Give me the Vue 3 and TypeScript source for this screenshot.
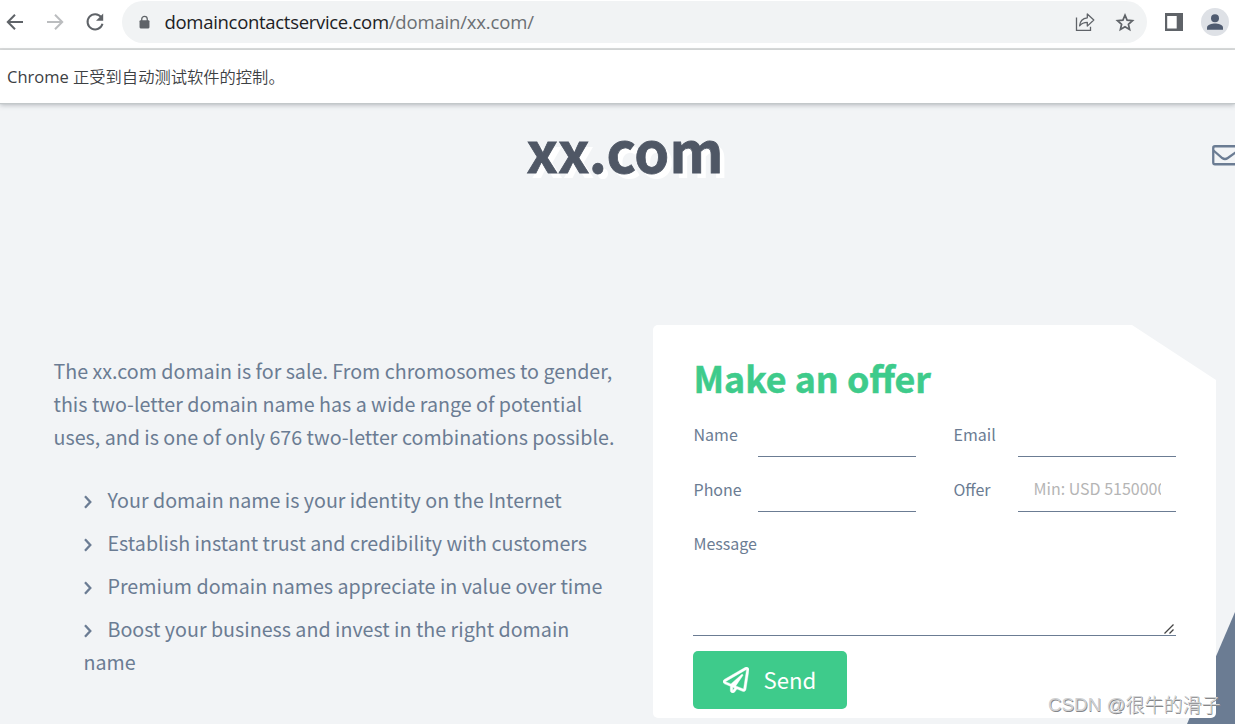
<script setup lang="ts">
import { ref } from 'vue'

interface Field {
  label: string
  name: string
  placeholder: string
}

const fields: Field[] = [
  { label: 'Name', name: 'name', placeholder: '' },
  { label: 'Email', name: 'email', placeholder: '' },
  { label: 'Phone', name: 'phone', placeholder: '' },
  { label: 'Offer', name: 'offer', placeholder: 'Min: USD 5150000' },
]

const benefits: string[][] = [
  ['Your domain name is your identity on the Internet'],
  ['Establish instant trust and credibility with customers'],
  ['Premium domain names appreciate in value over time'],
  ['Boost your business and invest in the right domain', 'name'],
]

const intro: string[] = [
  'The xx.com domain is for sale. From chromosomes to gender,',
  'this two-letter domain name has a wide range of potential',
  'uses, and is one of only 676 two-letter combinations possible.',
]

const values = ref<Record<string, string>>({ name: '', email: '', phone: '', offer: '' })
const message = ref('')
</script>

<template>
  <div class="window">
    <header class="toolbar">
      <svg class="nav" viewBox="0 0 20 20"><path d="M18 10H3M10 2.8L2.8 10l7.2 7.2" fill="none" stroke="#5f6368" stroke-width="2" /></svg>
      <svg class="nav" viewBox="0 0 20 20"><path d="M2 10h15M10 2.8l7.2 7.2-7.2 7.2" fill="none" stroke="#bbbdbf" stroke-width="2" /></svg>
      <svg class="nav" viewBox="0 0 20 20"><path d="M16.2 5.2A7.6 7.6 0 1 0 17.5 11.8" fill="none" stroke="#5f6368" stroke-width="2" /><path d="M18.2 1.6v7.2H11z" fill="#5f6368" /></svg>
      <div class="omnibox">
        <svg class="lock" viewBox="0 0 12 14"><path d="M3 6V3.8a3 3 0 0 1 6 0V6" fill="none" stroke="#5f6368" stroke-width="1.4" /><rect x=".6" y="5" width="10.8" height="9" rx="1.2" fill="#5f6368" /></svg>
        <span class="url"><span class="host">domaincontactservice.com</span><span class="path">/domain/xx.com/</span></span>
        <svg class="share" viewBox="0 0 20 20"><path d="M1.5 5.500v12.800h14v-3.500" fill="none" stroke="#5f6368" stroke-width="1.3" /><path d="M12.3 2v3.800C7.500 6.200 5 9 4.600 13.800c2-2.500 4.400-3.500 7.700-3.500v3.800L18.800 8z" fill="none" stroke="#5f6368" stroke-width="1.3" stroke-linejoin="round" /></svg>
        <svg class="star" viewBox="0 0 20 20"><path d="M10 3.200l2.100 5 5.400.5-4.100 3.600 1.200 5.300-4.600-2.800-4.600 2.800 1.200-5.300L2.500 8.700l5.400-.5z" fill="none" stroke="#5f6368" stroke-width="1.700" /></svg>
      </div>
      <svg class="panel" viewBox="0 0 18 18"><rect width="18" height="18" fill="#5f6368" /><rect x="2.200" y="3" width="9.500" height="12.500" fill="#fff" /></svg>
      <svg class="avatar" viewBox="0 0 28 28"><circle cx="14" cy="14" r="14" fill="#dee1e6" /><circle cx="14" cy="10.300" r="4" fill="#4f5b70" /><path d="M6 21.800v-2.300c0-2.800 5-4 8-4s8 1.200 8 4v2.300z" fill="#4f5b70" /></svg>
    </header>

    <div class="infobar"><span class="latin">Chrome</span><span class="han">正受到自动测试软件的控制。</span></div>

    <main class="page">
      <div class="masthead">
        <h1>xx.com</h1>
        <svg class="mail" viewBox="0 0 28 22"><rect x="1.250" y="1.250" width="25.500" height="18" rx="1.700" fill="none" stroke="#6b7c93" stroke-width="2.300" /><path d="M1.500 5.500l8.700 7.500q2.800 2 5.600 0l10.700-7.500" fill="none" stroke="#6b7c93" stroke-width="2.300" /></svg>
      </div>

      <div class="content">
        <section class="pitch">
          <p><span v-for="(line, i) in intro" :key="i" class="line">{{ line }}</span></p>
          <ul>
            <li v-for="(item, i) in benefits" :key="i">
              <span class="line"><svg class="chev" viewBox="0 0 8 14"><path d="M1 1.300l5.300 5.700L1 12.700" fill="none" stroke="#6b7c93" stroke-width="2.300" /></svg>{{ item[0] }}</span>
              <span v-if="item[1]" class="line">{{ item[1] }}</span>
            </li>
          </ul>
        </section>

        <form class="card" @submit.prevent>
          <h2>Make an offer</h2>
          <div class="fields">
            <label v-for="f in fields" :key="f.name" class="field">
              <span>{{ f.label }}</span>
              <input v-model="values[f.name]" type="text" :placeholder="f.placeholder" />
            </label>
          </div>
          <label class="message">
            <span>Message</span>
            <textarea v-model="message"></textarea>
            <svg class="grip" viewBox="0 0 10 10"><path d="M.5 9.500l9-9M5.500 9.500l4-4" stroke="#444" stroke-width="1.300" /></svg>
          </label>
          <button type="submit">
            <svg class="plane" viewBox="0 0 512 512"><path d="M440 6.500L24 246.100c-34.400 19.900-31.100 70.800 5.700 85.900L144 379.600V464c0 46.400 59.200 65.500 86.600 28.600l43.800-59.100 111.900 46.200c5.900 2.400 12.100 3.600 18.300 3.600 8.200 0 16.300-2.100 23.600-6.200 12.800-7.200 21.600-20 23.900-34.500l59.400-387.200c6.100-40.100-36.900-68.800-71.500-48.900zM192 464v-64.600l36.600 15.100L192 464zm212.600-28.700l-153.800-63.500L391 169.500c10.700-15.500-9.500-33.500-23.700-21.200L155.800 332.600 48 288 464 48l-59.400 387.300z" fill="#fff" stroke="#fff" stroke-width="8" /></svg>
            <span>Send</span>
          </button>
        </form>
      </div>
      <svg class="wedge" viewBox="0 0 48 112"><path d="M48 0v112H0z" fill="#6b7c93" /></svg>
    </main>
    <div class="watermark"><span>CSDN @</span><span class="wm-han">很牛的滑子</span></div>
  </div>
</template>

<style>
html,
body {
  overflow: hidden;
}
</style>

<style scoped>
* {
  box-sizing: border-box;
}
.window {
  position: relative;
  width: 1235px;
  height: 724px;
  overflow: hidden;
  display: flex;
  flex-direction: column;
  background: #f2f4f6;
  color: #6b7c93;
  font-family: "Noto Sans CJK SC", sans-serif;
}
svg {
  display: block;
  flex: none;
}
.toolbar {
  height: 50px;
  flex: none;
  display: flex;
  align-items: center;
  background: #fff;
  border-bottom: 2px solid #dadcdc;
  padding: 0 6px 4px 5px;
}
.nav {
  width: 20px;
  height: 20px;
  margin-right: 20px;
}
.omnibox {
  width: 1026px;
  height: 42px;
  margin-left: -3px;
  border-radius: 21px;
  background: #f1f3f4;
  display: flex;
  align-items: center;
  padding: 0 12px 0 17px;
}
.lock {
  width: 11px;
  height: 14px;
}
.url {
  flex: 1;
  margin-left: 14.500px;
  font: 18.500px/28px "Open Sans", sans-serif;
  white-space: nowrap;
  color: #202124;
}
.host {
  letter-spacing: -0.3px;
}
.path {
  color: #6b6f73;
  letter-spacing: -0.17px;
}
.share,
.star {
  width: 20px;
  height: 20px;
}
.star {
  margin-left: 20px;
}
.panel {
  width: 18px;
  height: 18px;
  margin-left: 18px;
}
.avatar {
  width: 28px;
  height: 28px;
  margin-left: 18px;
}
.infobar {
  position: relative;
  z-index: 1;
  height: 53px;
  flex: none;
  background: #fff;
  display: flex;
  align-items: center;
  padding: 0 0 0 7px;
  color: #3c4043;
  box-shadow: 0 1px 1px #c3c8ca, 0 2px 5px rgba(60, 70, 80, 0.35);
}
.latin {
  font: 16.500px/24px "Open Sans", sans-serif;
  width: 66px;
}
.han {
  font-size: 16.300px;
  line-height: 24px;
  margin-top: -2px;
  font-weight: 350;
}
.page {
  position: relative;
  flex: 1;
}
.masthead {
  height: 222px;
  display: flex;
  align-items: flex-start;
  padding: 1px 0 0 526.500px;
}
h1 {
  margin: 4.500px 0 0;
  width: 685.500px;
  font-size: 56px;
  line-height: 80px;
  font-weight: 700;
  color: #4f5765;
  letter-spacing: 0.1px;
  -webkit-text-stroke: 0.8px #4f5765;
  text-shadow: 5px 5px 0 #fff;
}
.mail {
  width: 28px;
  height: 22px;
  margin: 41px -5px 0 0;
}
.content {
  position: relative;
  z-index: 1;
  display: flex;
}
.pitch {
  width: 653px;
  padding: 29px 0 0 53.500px;
  font-size: 19.680px;
  line-height: 33px;
}
.pitch p,
.pitch ul {
  margin: 0;
  padding: 0;
  list-style: none;
}
.pitch ul {
  padding: 30px 0 0 30px;
}
li {
  margin-bottom: 10px;
}
.line {
  display: flex;
  align-items: center;
  white-space: pre;
}
.chev {
  width: 8px;
  height: 14px;
  margin: 4px 16px 0 0;
}
.card {
  width: 563px;
  height: 393px;
  padding: 27px 40px 0;
  border-radius: 5px;
  background: #fff;
  clip-path: polygon(0 0, 479px 0, 563px 55px, 563px 100%, 0 100%);
}
h2 {
  margin: 0 0 3px;
  padding-left: 0.5px;
  font-size: 35.800px;
  line-height: 50px;
  font-weight: 700;
  color: #3ecb8b;
  -webkit-text-stroke: 0.5px #3ecb8b;
}
.fields {
  display: grid;
  grid-template-columns: 223px 223px;
  grid-template-rows: 55px 55px;
  column-gap: 37px;
}
.field {
  display: flex;
  padding-top: 7px;
  font-size: 16px;
  line-height: 44px;
}
.field span {
  width: 65px;
  padding-left: 0.5px;
}
input {
  width: 158px;
  height: 45px;
  border: 0;
  border-bottom: 1px solid #6b7c93;
  padding: 0 15px 2px 15.500px;
  outline: 0;
  background: none;
  font: inherit;
  color: inherit;
}
input::placeholder {
  color: #b5b5b5;
  opacity: 1;
}
.message {
  position: relative;
  display: flex;
  flex-direction: column;
  height: 121px;
  font-size: 16px;
  line-height: 24px;
  padding-top: 16px;
}
.message span {
  padding-left: 0.5px;
}
textarea {
  flex: 1;
  width: 483px;
  border: 0;
  border-bottom: 1px solid #6b7c93;
  resize: none;
  outline: 0;
  background: none;
}
.grip {
  position: absolute;
  right: 2px;
  bottom: 2px;
  width: 10px;
  height: 10px;
}
button {
  width: 154px;
  height: 58px;
  margin-top: 15px;
  border: 0;
  border-radius: 5px;
  background: #3ecb8b;
  color: #fff;
  display: flex;
  align-items: center;
  padding: 0 0 0 30px;
  font: 22.200px/58px "Noto Sans CJK SC", sans-serif;
}
button span {
  margin-top: -2px;
}
.plane {
  width: 26px;
  height: 26px;
  margin-right: 14.500px;
}
.wedge {
  position: absolute;
  right: 0;
  bottom: 0;
  width: 48px;
  height: 112px;
  z-index: 0;
}
.watermark {
  position: absolute;
  z-index: 2;
  left: 1048px;
  top: 692px;
  display: flex;
  font: 18.800px/26px "Liberation Sans", sans-serif;
  color: #d0d1d2;
  text-shadow: 0.7px 0.7px 0 #85878a;
  white-space: nowrap;
}
.wm-han {
  font: 300 19px/24px "Noto Sans CJK SC", sans-serif;
}
</style>
